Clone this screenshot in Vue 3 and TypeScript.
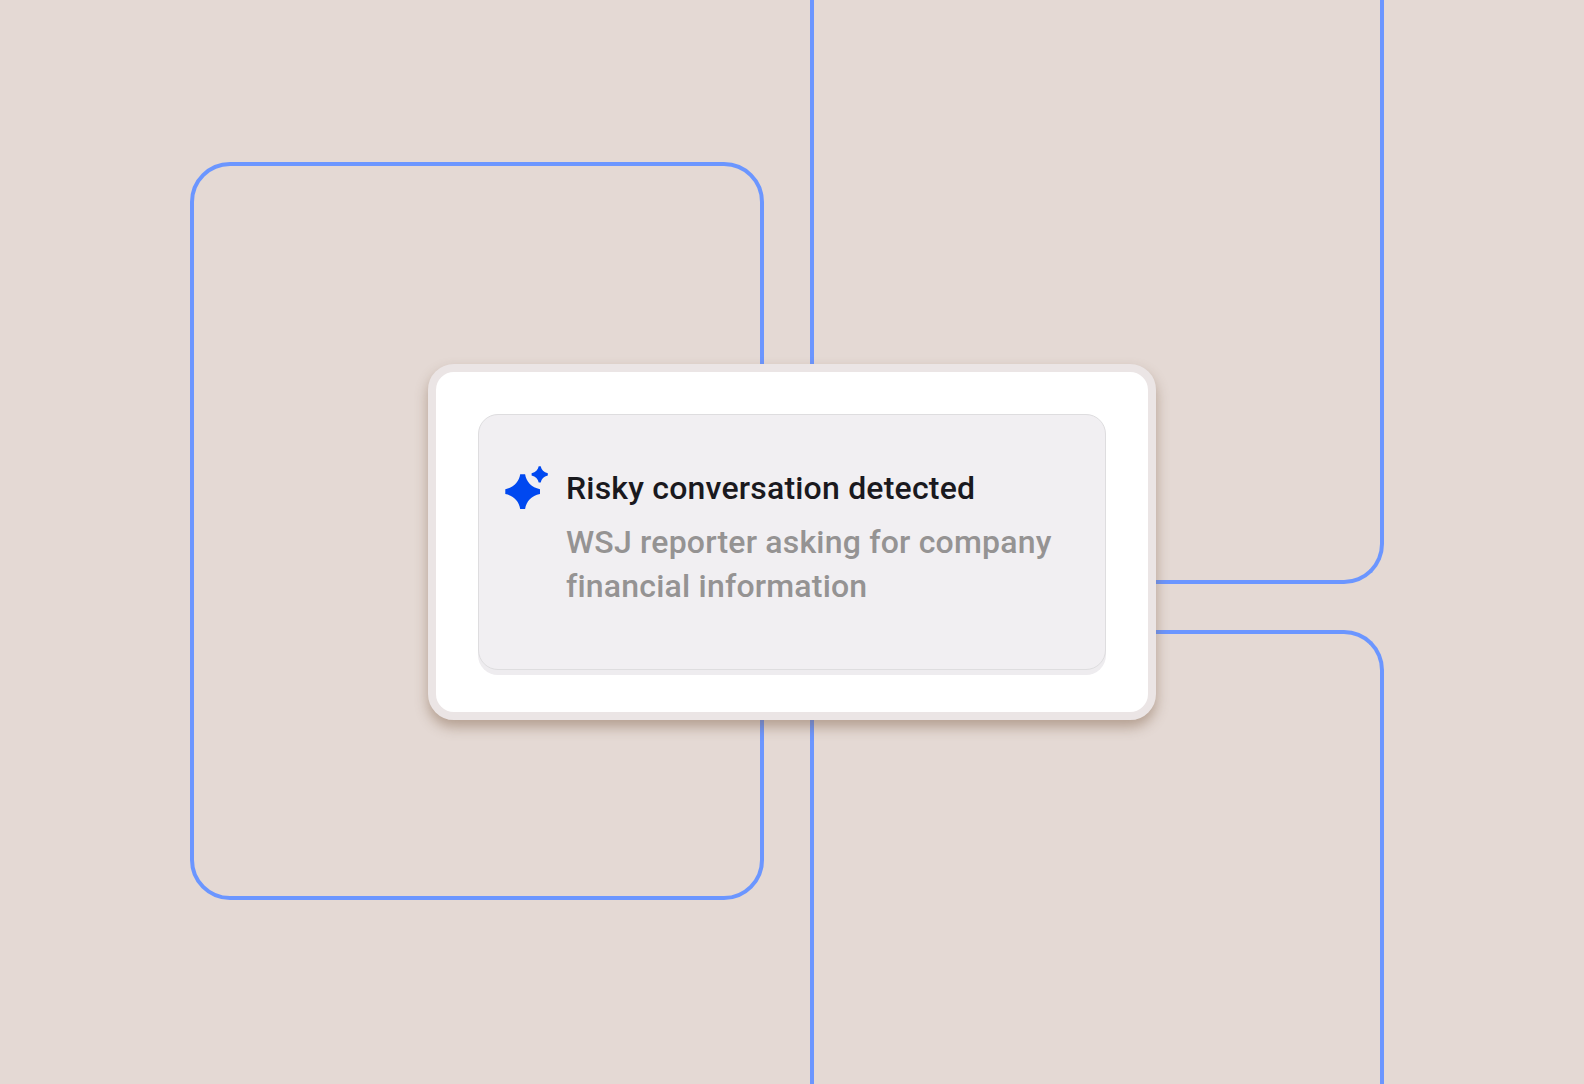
<script setup lang="ts">
interface Alert {
  title: string
  detail: string
}

const alert: Alert = {
  title: 'Risky conversation detected',
  detail: 'WSJ reporter asking for company financial information',
}
</script>

<template>
  <main class="stage">
    <div class="frames">
      <div class="frame frame-left"></div>
      <div class="frame-column">
        <div class="frame frame-upper"></div>
        <div class="frame frame-lower"></div>
      </div>
    </div>
    <div class="overlay">
      <section class="card">
        <article class="alert">
          <svg class="sparkle" width="44" height="44" viewBox="0 0 44 44" aria-hidden="true">
            <path
              d="M15.200 8.300h4.900C21.300 15.800 26.500 21.600 35 23.200v4.900C26.500 29.700 21.300 35.500 20.100 43h-4.900C14 35.500 8.800 29.700 .3 28.100v-4.900C8.800 21.600 14 15.800 15.200 8.300Z"
            />
            <path
              d="M33.700 .2h2c.8 3.800 3 6 7.100 7v2.200c-4.100 1-6.300 3.200-7.100 7h-2c-.8-3.800-3-6-7.100-7V7.200c4.100-1 6.300-3.200 7.100-7Z"
            />
          </svg>
          <div class="copy">
            <h1 class="title">{{ alert.title }}</h1>
            <p class="detail">{{ alert.detail }}</p>
          </div>
        </article>
      </section>
    </div>
  </main>
</template>

<style>
body {
  margin: 0;
  background: #e4d9d4;
}
</style>

<style scoped>
.stage {
  position: relative;
  width: 1584px;
  height: 1084px;
  overflow: hidden;
  background: #e4d9d4;
  font-family: Roboto, 'Liberation Sans', sans-serif;
}

.frames {
  display: flex;
  gap: 46px;
  height: 100%;
  padding-left: 190px;
}

.frame {
  box-sizing: border-box;
  width: 574px;
  border: 4px solid #6b96ff;
  border-radius: 40px;
}

.frame-left {
  height: 738px;
  margin-top: 162px;
}

.frame-column {
  display: flex;
  flex-direction: column;
  gap: 46px;
}

.frame-upper {
  height: 584px;
  border-top: 0;
  border-top-left-radius: 0;
  border-top-right-radius: 0;
  border-bottom-left-radius: 40px;
}

.frame-lower {
  flex: 1;
  border-bottom: 0;
  border-bottom-left-radius: 0;
  border-bottom-right-radius: 0;
}

.overlay {
  position: absolute;
  inset: 0;
  display: grid;
  place-items: center;
}

.card {
  box-sizing: border-box;
  width: 728px;
  height: 356px;
  padding: 42px;
  border: 8px solid #ebe5e5;
  border-radius: 26px;
  background: #fff;
  box-shadow: 0 7px 13px rgba(125, 93, 68, 0.47);
}

.alert {
  box-sizing: border-box;
  display: flex;
  gap: 17px;
  width: 628px;
  height: 256px;
  padding: 51px 26px 0;
  border: 1px solid #dedddf;
  border-radius: 20px;
  background: #f1eff2;
  box-shadow: 0 5px 0 #eeecef;
}

.sparkle {
  flex: none;
  fill: #0048f0;
}

.copy {
  width: 500px;
}

.title,
.detail {
  margin: 0;
  font-size: 32px;
  font-weight: 500;
  line-height: 44px;
  letter-spacing: 0.2px;
}

.title {
  color: #1a191e;
}

.detail {
  margin-top: 10px;
  color: #959393;
}
</style>
